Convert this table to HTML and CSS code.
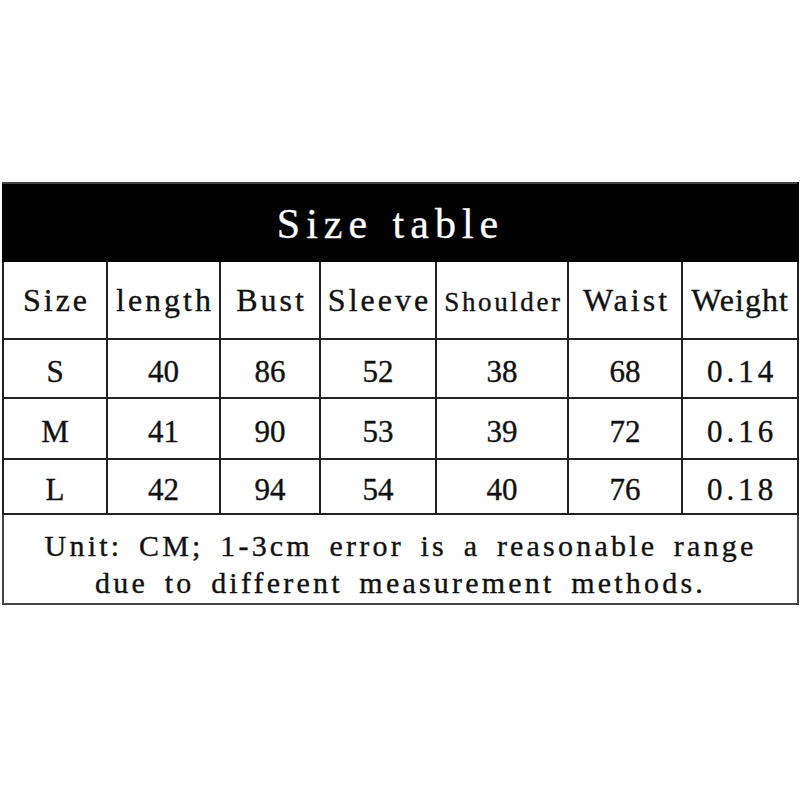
FILE: index.html
```html
<!DOCTYPE html>
<html>
<head>
<meta charset="utf-8">
<link rel="stylesheet" href="styles.css">
</head>
<body>
<div class="page">
<table class="size-table">
  <colgroup>
    <col class="c1"><col class="c2"><col class="c3"><col class="c4"><col class="c5"><col class="c6"><col class="c7">
  </colgroup>
  <thead>
    <tr class="title-row"><th colspan="7" class="title">Size table</th></tr>
    <tr class="head-row">
      <th>Size</th><th>length</th><th>Bust</th><th>Sleeve</th><th class="small">Shoulder</th><th>Waist</th><th class="tight">Weight</th>
    </tr>
  </thead>
  <tbody>
    <tr class="r-s"><td>S</td><td>40</td><td>86</td><td>52</td><td>38</td><td>68</td><td class="dec">0.14</td></tr>
    <tr class="r-m"><td>M</td><td>41</td><td>90</td><td>53</td><td>39</td><td>72</td><td class="dec">0.16</td></tr>
    <tr class="r-l"><td>L</td><td>42</td><td>94</td><td>54</td><td>40</td><td>76</td><td class="dec">0.18</td></tr>
    <tr class="note-row"><td colspan="7" class="note">Unit: CM; 1-3cm error is a reasonable range<br>due to different measurement methods.</td></tr>
  </tbody>
</table>
</div>
</body>
</html>
```
FILE: styles.css
```css
html, body {
  margin: 0;
  padding: 0;
  background: #fff;
}
.page {
  padding: 182px 0 0 2px;
}
.size-table {
  border-collapse: collapse;
  table-layout: fixed;
  width: 797px;
  font-family: "Liberation Serif", serif;
  color: #111;
  border: 2px solid #444;
}
.c1 { width: 104px; }
.c2 { width: 113px; }
.c3 { width: 100px; }
.c4 { width: 116px; }
.c5 { width: 132px; }
.c6 { width: 114px; }
.c7 { width: 116px; }
.size-table th, .size-table td {
  border: 2px solid #222;
  padding: 0;
  text-align: center;
  vertical-align: middle;
  white-space: nowrap;
  overflow: hidden;
  font-weight: normal;
  -webkit-text-stroke: 0.35px #111;
}
.title-row { height: 78px; }
.size-table th.title {
  background: #000;
  color: #fff;
  -webkit-text-stroke: 0.3px #fff;
  font-size: 42px;
  letter-spacing: 6px;
  word-spacing: 3px;
  border-color: #000;
  border-top-color: #444;
  padding: 4px 20px 0 0;
}
.head-row { height: 78px; }
.head-row th {
  font-size: 32px;
  letter-spacing: 3px;
  padding-left: 3px;
}
.head-row th.small {
  font-size: 27px;
  letter-spacing: 2.6px;
  padding-top: 4px;
}
.head-row th.tight {
  letter-spacing: 1px;
  padding-left: 0;
}
.r-s { height: 59px; }
.r-m { height: 61px; }
.r-l { height: 55px; }
.size-table tbody td {
  font-size: 31px;
  padding-top: 6px;
}
.size-table td.dec {
  letter-spacing: 4px;
  padding-left: 4px;
}
.note-row { height: 90px; }
.size-table td.note {
  font-size: 30px;
  letter-spacing: 3.2px;
  word-spacing: 6px;
  line-height: 37px;
  border-color: #444;
  padding: 10px 0 0 0;
}
```
